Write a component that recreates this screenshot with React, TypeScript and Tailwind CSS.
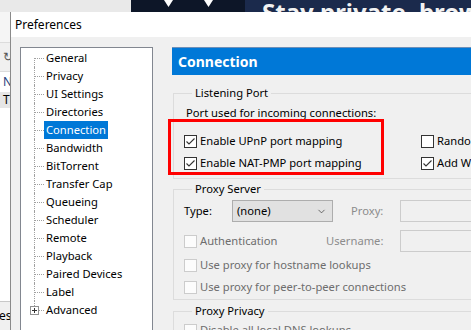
import { ChevronDown } from "lucide-react";

const treeItems = [
  "General",
  "Privacy",
  "UI Settings",
  "Directories",
  "Connection",
  "Bandwidth",
  "BitTorrent",
  "Transfer Cap",
  "Queueing",
  "Scheduler",
  "Remote",
  "Playback",
  "Paired Devices",
  "Label",
  "Advanced",
];

const Check = ({ checked, disabled }: { checked?: boolean; disabled?: boolean }) => (
  <span
    className={
      "flex h-[13px] w-[13px] shrink-0 items-center justify-center border " +
      (disabled ? "border-[#cccccc] bg-[#fcfcfc]" : "border-[#333333] bg-white")
    }
  >
    {checked && (
      <svg width="11" height="11" viewBox="0 0 11 11">
        <polyline points="1.5,5.5 4,8 9.5,2.5" fill="none" stroke="#333333" strokeWidth="1.1" />
      </svg>
    )}
  </span>
);

const CheckRow = ({
  label,
  checked,
  disabled,
}: {
  label: string;
  checked?: boolean;
  disabled?: boolean;
}) => (
  <div className="flex h-[22px] items-center gap-[3px] whitespace-nowrap">
    <Check checked={checked} disabled={disabled} />
    <span className={disabled ? "text-[#6d6d6d]" : "text-black"}>{label}</span>
  </div>
);

const TreeRow = ({ label, index }: { label: string; index: number }) => {
  const first = index === 0;
  const last = index === treeItems.length - 1;
  const selected = label === "Connection";
  return (
    <div className="relative flex h-[18px] items-center">
      <div className="relative h-full w-[23px] shrink-0">
        {/* vertical connector */}
        <div
          className={
            "absolute left-[13px] w-0 border-l border-dotted border-[#a0a0a0] " +
            (first ? "top-[9px] bottom-0" : last ? "top-0 h-[9px]" : "top-0 bottom-0")
          }
        />
        <div className="absolute left-[14px] top-[9px] w-[9px] border-t border-dotted border-[#a0a0a0]" />
        {last && (
          <div className="absolute left-[9px] top-[5px] flex h-[9px] w-[9px] items-center justify-center border border-[#919191] bg-white">
            <svg width="7" height="7" viewBox="0 0 7 7">
              <path d="M1 3.5h5M3.5 1v5" stroke="#333" strokeWidth="1" />
            </svg>
          </div>
        )}
      </div>
      <span
        className={
          "whitespace-nowrap px-[2px] leading-[18px] " +
          (selected ? "bg-[#0078d7] text-white" : "text-black")
        }
      >
        {label}
      </span>
    </div>
  );
};

export default function App() {
  return (
    <div className="relative h-[330px] w-[471px] overflow-hidden bg-white font-['Noto_Sans',sans-serif] text-[11.2px]">
      {/* window behind */}
      <div className="flex h-[12px]">
        <div className="w-[131px] bg-[#e9e9e9]" />
        <div className="relative w-[114px] bg-[#0d1628]">
          <svg className="absolute left-[33px] top-0" width="9" height="7" viewBox="0 0 9 7">
            <path d="M0 0h9L4.5 7z" fill="#fff" />
          </svg>
          <svg className="absolute left-[73px] top-0" width="9" height="7" viewBox="0 0 9 7">
            <path d="M0 0h9L4.5 7z" fill="#fff" />
          </svg>
        </div>
        <div className="flex-1 overflow-hidden bg-[#1b2a4c] pl-[17px]">
          <div className="mt-[-2px] whitespace-nowrap text-[24px] font-bold leading-[28px] text-[#f2f2f2]">
            Stay private, browse
          </div>
        </div>
      </div>
      <div className="flex h-[318px] w-[10px] flex-col bg-white text-[12px]">
        <div className="h-[31px] shrink-0 border-b border-[#dcdcdc] bg-[#f5f5f5]" />
        <div className="flex h-[29px] shrink-0 items-center border-b border-[#dcdcdc] bg-[#f0f0f0] pl-[3px] text-[#555]">
          ↻
        </div>
        <div className="flex h-[20px] shrink-0 items-center pl-[3px] text-[#1f3f80]">N</div>
        <div className="flex h-[16px] shrink-0 items-center bg-[#e6e6e6] pl-[3px]">T</div>
        <div className="flex-1" />
        <div className="flex h-[29px] shrink-0 items-center border-t border-[#c8c8c8] bg-[#f0f0f0] text-black">
          <span className="ml-[-4px]">les</span>
        </div>
      </div>

      {/* Preferences dialog */}
      <div className="absolute left-[10px] top-[12px] flex h-[330px] w-[560px] flex-col overflow-hidden border-l border-[#8a8a8a] bg-[#f0f0f0]">
        <div className="flex h-[25px] shrink-0 items-center bg-white pl-[4px] text-[12px] text-black">
          Preferences
        </div>
        <div className="flex min-h-0 flex-1 pl-[9px] pt-[10px]">
          {/* tree */}
          <div className="h-[400px] w-[133px] shrink-0 border border-[#828790] bg-white pt-[1px]">
            {treeItems.map((t, i) => (
              <TreeRow key={t} label={t} index={i} />
            ))}
          </div>

          {/* right panel */}
          <div className="ml-[19px] flex flex-1 flex-col">
            <div className="flex h-[28px] shrink-0 items-center border-t border-[#6d8fb8] bg-[#0078d7] pl-[6px] text-[14px] font-bold text-white">
              Connection
            </div>

            <fieldset className="ml-[1px] mt-[10px] shrink-0 border border-[#dcdcdc] pb-[4px] pl-[10px]">
              <legend className="ml-[8px] px-[3px] leading-[16px]">Listening Port</legend>
              <div className="mt-[4px] pl-[2px] leading-[16px]">Port used for incoming connections:</div>
              <div className="mt-[9px] flex">
                <div className="w-[237px] shrink-0">
                  <CheckRow label="Enable UPnP port mapping" checked />
                  <CheckRow label="Enable NAT-PMP port mapping" checked />
                </div>
                <div>
                  <CheckRow label="Randomize port each start" />
                  <CheckRow label="Add Windows Firewall exception" checked />
                </div>
              </div>
            </fieldset>

            <fieldset className="ml-[1px] mt-[2px] shrink-0 border border-[#dcdcdc] pb-[1px] pl-[10px]">
              <legend className="ml-[8px] px-[3px] leading-[16px]">Proxy Server</legend>
              <div className="mt-[3px] flex h-[22px] items-center">
                <span className="w-[48px] shrink-0">Type:</span>
                <div className="flex h-[22px] w-[101px] shrink-0 items-center justify-between border border-[#adadad] bg-[#e1e1e1] pl-[4px] pr-[5px]">
                  <span>(none)</span>
                  <ChevronDown size={11} strokeWidth={1.5} className="text-[#333]" />
                </div>
                <span className="ml-[18px] w-[49px] shrink-0 text-[#8c8c8c]">Proxy:</span>
                <div className="h-[22px] flex-1 border border-[#cccccc] bg-[#f0f0f0]" />
              </div>
              <div className="mt-[8px] flex h-[22px] items-center">
                <div className="w-[142px] shrink-0">
                  <CheckRow label="Authentication" disabled />
                </div>
                <span className="w-[74px] shrink-0 text-[#8c8c8c]">Username:</span>
                <div className="h-[22px] flex-1 border border-[#cccccc] bg-[#f0f0f0]" />
              </div>
              <div className="mt-[2px]">
                <CheckRow label="Use proxy for hostname lookups" disabled />
                <CheckRow label="Use proxy for peer-to-peer connections" disabled />
              </div>
            </fieldset>

            <fieldset className="ml-[1px] mt-[3px] shrink-0 border border-[#dcdcdc] pl-[10px]">
              <legend className="ml-[8px] px-[3px] leading-[16px]">Proxy Privacy</legend>
              <CheckRow label="Disable all local DNS lookups" disabled />
            </fieldset>
          </div>
        </div>
      </div>

      {/* red annotation */}
      <div className="absolute left-[168px] top-[119px] h-[56px] w-[216px] border-[3px] border-[#ff0000]" />
    </div>
  );
}
